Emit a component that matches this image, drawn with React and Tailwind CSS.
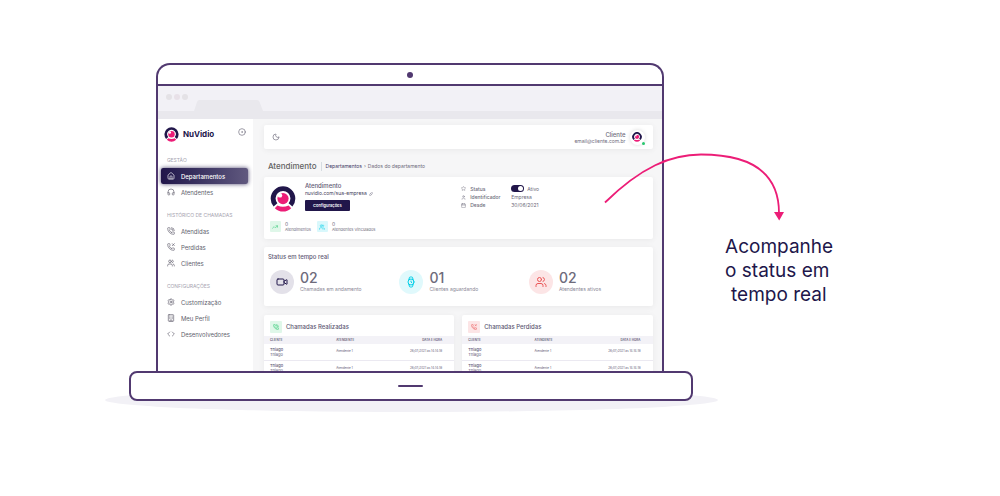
import React from 'react';
import {
  Home, Headphones, PhoneCall, PhoneMissed, Users, Settings, Building, Code, CircleDot, Moon,
  Link, TrendingUp, Star, User, Calendar, Video, Watch,
} from 'lucide-react';

function Logo({ className }) {
  return (
    <svg viewBox="0 0 26 26" className={className} aria-hidden="true">
      <path d="M3.6 20.6A12.300 12.300 0 1 1 22.400 20.600L18.600 17.200A7.400 7.400 0 1 0 7.400 17.200Z" fill="#21164a" />
      <circle cx="13" cy="12.600" r="5.600" fill="#ec1d77" />
      <circle cx="10" cy="9.400" r="2.200" fill="#fff" />
      <path d="M7.400 19.400Q13 22.200 18.600 19.400L21.200 22.200Q17.500 25.600 13 25.600T4.800 22.200Z" fill="#ec1d77" />
    </svg>
  );
}

const menu = [
  { title: 'GESTÃO', items: [['Departamentos', Home, true], ['Atendentes', Headphones]] },
  { title: 'HISTÓRICO DE CHAMADAS', items: [['Atendidas', PhoneCall], ['Perdidas', PhoneMissed], ['Clientes', Users]] },
  { title: 'CONFIGURAÇÕES', items: [['Customização', Settings], ['Meu Perfil', Building], ['Desenvolvedores', Code]] },
];

function Sidebar() {
  return (
    <aside className="w-[95px] shrink-0 bg-white pt-2">
      <div className="flex h-[14px] items-center pr-[7px] pl-1.5">
        <Logo className="size-[15px]" />
        <span className="ml-1 text-[8px] font-bold text-[#21164a]">NuVidio</span>
        <CircleDot className="mb-1 ml-auto size-2 text-[#6e6b7b]" />
      </div>
      <nav className="mt-[15px] flex flex-col gap-[11px]">
        {menu.map((group) => (
          <section key={group.title}>
            <h2 className="mb-1 pl-[9px] text-[5px] leading-2 text-[#a6a4b0]">{group.title}</h2>
            {group.items.map(([label, Icon, active]) => (
              <a
                key={label}
                href="#"
                className={
                  active
                    ? 'mr-[5px] ml-[3px] flex h-4 items-center gap-1.5 rounded-xs bg-linear-to-r from-[#21164a] to-[#61597f] pl-1.5 text-[6px] font-medium text-white shadow-[0_0_4px_#21164acc]'
                    : 'mr-[5px] ml-[3px] flex h-4 items-center gap-1.5 pl-1.5 text-[6px] text-[#625f6e]'
                }
              >
                <Icon className="size-2" />
                {label}
              </a>
            ))}
          </section>
        ))}
      </nav>
    </aside>
  );
}

const card = 'rounded-xs bg-white shadow-[0_1px_6px_#0000000f]';

function Header() {
  return (
    <header className={`${card} flex h-6 items-center justify-between px-2`}>
      <button type="button" aria-label="Modo escuro">
        <Moon className="size-2 text-[#6e6b7b]" />
      </button>
      <div className="flex items-center gap-1">
        <div className="text-right">
          <p className="text-[6px] leading-[7px] font-medium text-[#6e6b7b]">Cliente</p>
          <p className="text-[5px] leading-[6px] text-[#6e6b7b]">email@cliente.com.br</p>
        </div>
        <div className="relative grid size-[15px] place-items-center rounded-full bg-white shadow-[0_0_4px_#00000026]">
          <Logo className="size-[10px]" />
          <span className="absolute right-0 bottom-0 size-[3px] rounded-full bg-[#28c76f]" />
        </div>
      </div>
    </header>
  );
}

function Stat({ icon: Icon, label, tone }) {
  return (
    <div className="flex items-center gap-1">
      <span className={`grid size-[11px] place-items-center rounded-[1px] ${tone}`}>
        <Icon className="size-1.5" />
      </span>
      <div className="text-[#6e6b7b]">
        <p className="text-[5px] leading-[6px]">0</p>
        <p className="text-[4px] leading-[5px]">{label}</p>
      </div>
    </div>
  );
}

function Department() {
  const term = 'flex w-[50px] items-center gap-1 font-medium';
  return (
    <section className={`${card} mt-[3px] flex h-[62px] pt-[5px] pl-1.5 text-[#6e6b7b]`}>
      <div className="w-1/2">
        <div className="flex items-start">
          <Logo className="mt-1 size-[26px]" />
          <div className="ml-[9px]">
            <h2 className="text-[6px] leading-2 font-medium text-[#5e5873]">Atendimento</h2>
            <p className="flex items-center gap-0.5 text-[5px] leading-[7px] text-[#44415a]">
              nuvidio.com/sua-empresa <Link className="size-1" />
            </p>
            <button type="button" className="mt-[3px] block h-[11px] w-[45px] rounded-[1px] bg-[#21164a] text-[4px] leading-[11px] font-semibold text-white">
              Configurações
            </button>
          </div>
        </div>
        <div className="mt-[9px] flex gap-1.5">
          <Stat icon={TrendingUp} label="Atendimentos" tone="bg-[#dff7e9] text-[#28c76f]" />
          <Stat icon={Users} label="Atendentes Vinculados" tone="bg-[#d9f8fc] text-[#00cfe8]" />
        </div>
      </div>
      <dl className="mt-[2px] text-[5px] leading-2">
        <div className="flex items-center">
          <dt className={term}><Star className="size-[5px]" />Status</dt>
          <dd>
            <label className="flex h-[9px] items-center gap-[3px]">
              <input
                type="checkbox"
                defaultChecked
                className="flex h-[7px] w-[13px] appearance-none items-center justify-end rounded-full bg-[#21164a] px-[1px] before:size-[5px] before:rounded-full before:bg-white"
              />
              Ativo
            </label>
          </dd>
        </div>
        <div className="flex items-center">
          <dt className={term}><User className="size-[5px]" />Identificador</dt>
          <dd>Empresa</dd>
        </div>
        <div className="flex items-center">
          <dt className={term}><Calendar className="size-[5px]" />Desde</dt>
          <dd>30/06/2021</dd>
        </div>
      </dl>
    </section>
  );
}

const live = [
  ['02', 'Chamadas em andamento', Video, 'bg-[#e3e1e9] text-[#21164a]'],
  ['01', 'Clientes aguardando', Watch, 'bg-[#e0f9fc] text-[#00cfe8]'],
  ['02', 'Atendentes ativos', Users, 'bg-[#fce5e6] text-[#ea5455]'],
];

function LiveStatus() {
  return (
    <section className={`${card} mt-2 h-[59px] pt-[5px]`}>
      <h2 className="pl-1 text-[6px] leading-[10px] font-medium text-[#5e5873]">Status em tempo real</h2>
      <div className="mt-2 grid grid-cols-3 gap-1.5 pl-1.5">
        {live.map(([value, label, Icon, tone]) => (
          <div key={label} className="flex items-center gap-1.5">
            <span className={`grid size-6 place-items-center rounded-full ${tone}`}>
              <Icon className="size-3" />
            </span>
            <div>
              <p className="text-[14px] leading-[14px] font-medium text-[#6e6b7b]">{value}</p>
              <p className="text-[5px] leading-2 text-[#8a8796]">{label}</p>
            </div>
          </div>
        ))}
      </div>
    </section>
  );
}

function Calls({ title, icon: Icon, tone }) {
  return (
    <section className={`${card} min-w-0 flex-1 pt-1.5 text-[#5e5873]`}>
      <h2 className="flex items-center gap-1 pl-1.5 text-[6px] leading-3 font-medium">
        <span className={`grid size-3 place-items-center rounded-[1px] ${tone}`}>
          <Icon className="size-1.5" />
        </span>
        {title}
      </h2>
      <table className="mt-[3px] w-full text-[3px] leading-[5px]">
        <thead className="bg-[#f3f2f7]">
          <tr className="h-2">
            <th className="w-[38%] pl-1.5 text-left font-semibold">CLIENTE</th>
            <th className="text-left font-semibold">ATENDENTE</th>
            <th className="pr-3 text-right font-semibold">DATA E HORA</th>
          </tr>
        </thead>
        <tbody>
          {[0, 1].map((row) => (
            <tr key={row} className="h-4 border-b border-[#ebe9f1]">
              <td className="pl-1.5 text-[4px]">
                <p className="font-medium">Thiago</p>
                <p>Thiago</p>
              </td>
              <td>Atendente 1</td>
              <td className="pr-3 text-right">26/07/2021 às 14:14:18</td>
            </tr>
          ))}
        </tbody>
      </table>
    </section>
  );
}

function BrowserBar() {
  return (
    <div className="bg-[#f2f1f6]">
      <div className="flex h-[25px] items-start">
        <div className="mt-2 ml-2 flex gap-0.5">
          <span className="size-1.5 rounded-full bg-[#e4e2e6]" />
          <span className="size-1.5 rounded-full bg-[#e8e1e8]" />
          <span className="size-1.5 rounded-full bg-[#e4e2e6]" />
        </div>
        <svg viewBox="0 0 70 11" className="mt-3.5 ml-1.5 h-[11px] w-[70px]" aria-hidden="true">
          <path d="M0 11L3 2Q3.600 0 5.500 0H63Q65 0 65.600 2L69 11Z" fill="#e9e8ed" />
        </svg>
      </div>
      <div className="h-2 bg-[#e9e8ed]" />
    </div>
  );
}

export default function App() {
  return (
    <main className="flex min-h-screen items-start overflow-hidden bg-white pt-[63px] pl-[10.5%] font-['Inter','Liberation_Sans',sans-serif]">
      <div className="relative w-[68.5%] shrink-0 pb-[11px]">
        <div className="absolute inset-x-0 bottom-0 h-6 rounded-[50%] bg-[#f2f1f6]" />
        <div className="mr-[8.9%] ml-[8.3%] rounded-t-[14px] border-2 border-b-0 border-[#513970]">
          <div className="flex h-[19px] items-center justify-center">
            <span className="size-1.5 rounded-full bg-[#513970]" />
          </div>
          <div className="h-[2px] bg-[#513970]" />
          <BrowserBar />
          <div className="flex h-[252px] overflow-hidden bg-[#f6f6f7]">
            <Sidebar />
            <div className="min-w-0 flex-1 pt-1.5 pr-[9px] pl-[11px]">
              <Header />
              <div className="mt-2.5 flex h-[15px] items-center pl-1">
                <h1 className="border-r border-[#d6dce1] pr-1 text-[8px] leading-[9px] font-medium text-[#636363]">Atendimento</h1>
                <nav className="flex gap-0.5 pl-1 text-[5px] text-[#6e6b7b]">
                  <a href="#" className="text-[#3f3663]">Departamentos</a>
                  <span>›</span>
                  <span>Dados do departamento</span>
                </nav>
              </div>
              <Department />
              <LiveStatus />
              <div className="mt-[9px] flex items-start gap-2">
                <Calls title="Chamadas Realizadas" icon={PhoneCall} tone="bg-[#dff7e9] text-[#28c76f]" />
                <Calls title="Chamadas Perdidas" icon={PhoneMissed} tone="bg-[#fce5e6] text-[#ea5455]" />
              </div>
            </div>
          </div>
        </div>
        <div className="relative mr-[4.1%] ml-[3.9%] grid h-[30px] place-items-center rounded-lg border-2 border-[#513970] bg-white">
          <span className="h-[2px] w-[25px] rounded-full bg-[#513970]" />
        </div>
        <svg viewBox="0 0 190 80" className="absolute top-[82px] left-[80.8%] h-[80px] w-[190px]" aria-hidden="true">
          <path d="M5 57.500C41 22 71 9.500 101 9.500C151 9.500 179 28 179 68" fill="none" stroke="#ec1d77" strokeWidth="1.800" />
          <path d="M174 67H184L179.200 75.500Z" fill="#ec1d77" />
        </svg>
      </div>
      <p className="mt-[172px] ml-[7px] text-[19px] leading-6 whitespace-nowrap text-[#21164a]">
        <span className="block">Acompanhe</span>
        <span className="block">o status em</span>
        <span className="block pl-1.5">tempo real</span>
      </p>
    </main>
  );
}
